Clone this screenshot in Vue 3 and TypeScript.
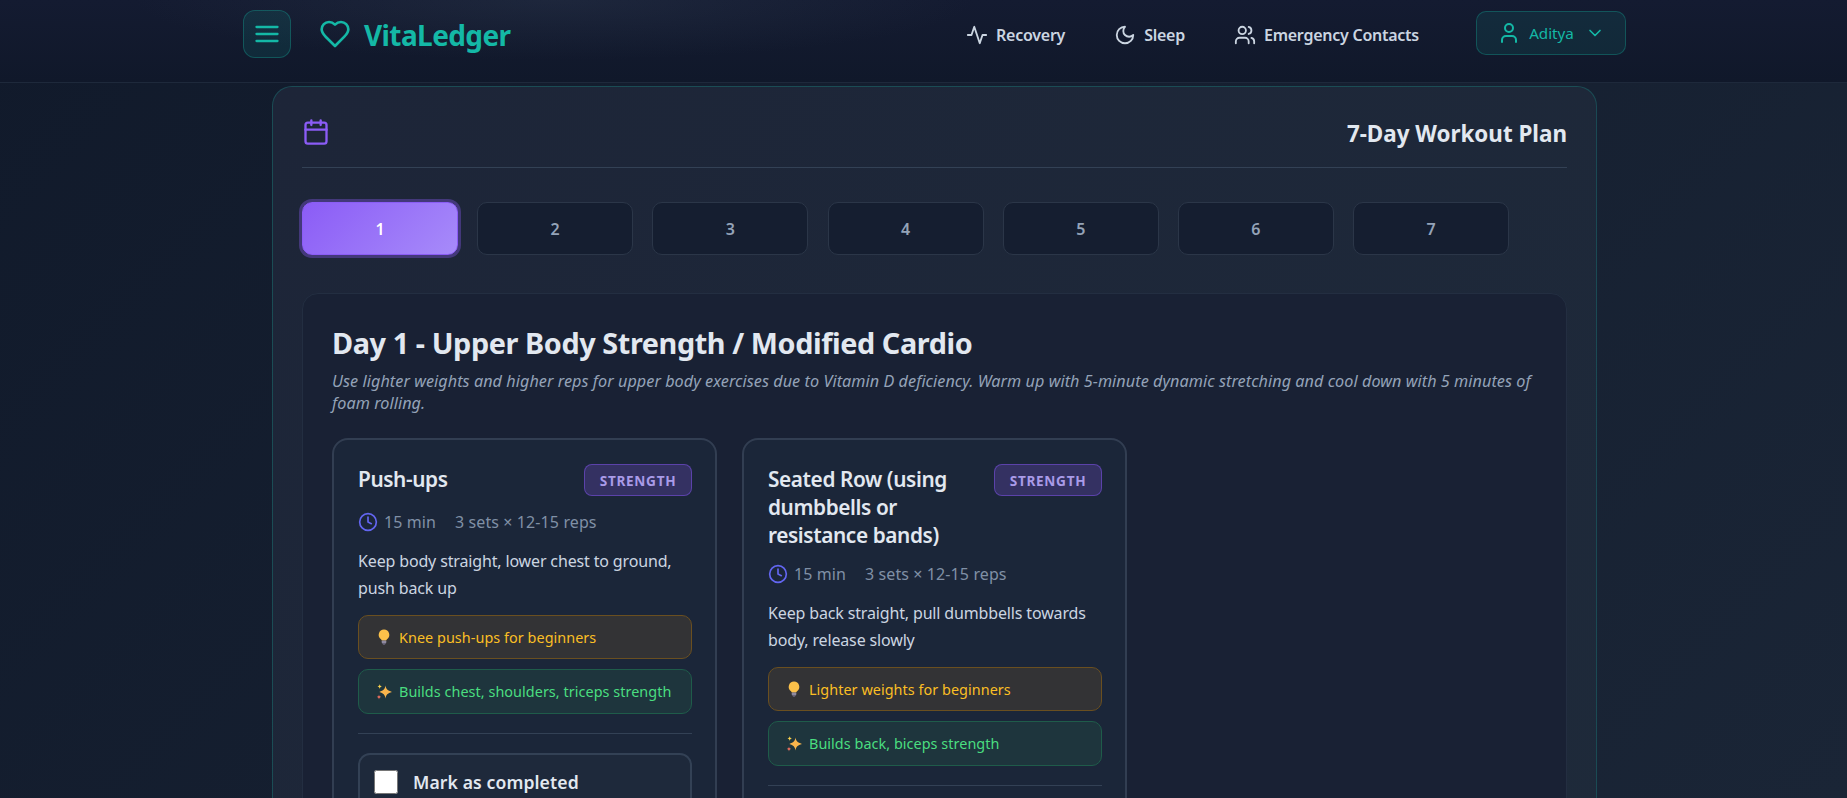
<script setup lang="ts">
import { ref } from 'vue'

type Exercise = {
    name: string
    duration: string
    sets: string
    description: string
    tip: string
    benefit: string
}

const days = [1, 2, 3, 4, 5, 6, 7]
const active_day = ref(1)

const exercises: Exercise[] = [
    {
        name: 'Push-ups',
        duration: '15 min',
        sets: '3 sets × 12-15 reps',
        description: 'Keep body straight, lower chest to ground, push back up',
        tip: 'Knee push-ups for beginners',
        benefit: 'Builds chest, shoulders, triceps strength',
    },
    {
        name: 'Seated Row (using dumbbells or resistance bands)',
        duration: '15 min',
        sets: '3 sets × 12-15 reps',
        description: 'Keep back straight, pull dumbbells towards body, release slowly',
        tip: 'Lighter weights for beginners',
        benefit: 'Builds back, biceps strength',
    },
]
</script>

<template>
    <div class="page">
        <header class="navbar">
            <div class="nav-inner">
                <button class="menu-btn" aria-label="Menu">
                    <svg width="28" height="28" viewBox="0 0 24 24" class="stroke"><path d="M3 6h18M3 12h18M3 18h18" /></svg>
                </button>
                <div class="brand">
                    <svg width="32" height="32" viewBox="0 0 24 24" class="stroke">
                        <path d="M19 14c1.49-1.46 3-3.21 3-5.5A5.5 5.5 0 0 0 16.5 3c-1.76 0-3 .5-4.5 2-1.5-1.500-2.740-2-4.500-2A5.500 5.500 0 0 0 2 8.500c0 2.300 1.500 4.050 3 5.500l7 7Z" />
                    </svg>
                    <span class="brand-name">VitaLedger</span>
                </div>
                <nav class="links">
                    <a class="link">
                        <svg width="22" height="22" viewBox="0 0 24 24" class="stroke"><path d="M22 12h-4l-3 9L9 3l-3 9H2" /></svg>
                        Recovery
                    </a>
                    <a class="link">
                        <svg width="22" height="22" viewBox="0 0 24 24" class="stroke"><path d="M12 3a6 6 0 0 0 9 9 9 9 0 1 1-9-9Z" /></svg>
                        Sleep
                    </a>
                    <a class="link">
                        <svg width="22" height="22" viewBox="0 0 24 24" class="stroke">
                            <path d="M16 21v-2a4 4 0 0 0-4-4H6a4 4 0 0 0-4 4v2" />
                            <circle cx="9" cy="7" r="4" />
                            <path d="M22 21v-2a4 4 0 0 0-3-3.870M16 3.130a4 4 0 0 1 0 7.750" />
                        </svg>
                        Emergency Contacts
                    </a>
                </nav>
                <button class="user-btn">
                    <svg width="24" height="24" viewBox="0 0 24 24" class="stroke">
                        <path d="M19 21v-2a4 4 0 0 0-4-4H9a4 4 0 0 0-4 4v2" />
                        <circle cx="12" cy="7" r="4" />
                    </svg>
                    <span>Aditya</span>
                    <svg width="20" height="20" viewBox="0 0 24 24" class="stroke"><path d="m6 9 6 6 6-6" /></svg>
                </button>
            </div>
        </header>

        <main class="plan">
            <div class="plan-head">
                <svg width="28" height="28" viewBox="0 0 24 24" class="stroke calendar">
                    <path d="M8 2v4M16 2v4" />
                    <rect x="3" y="4" width="18" height="18" rx="2" />
                    <path d="M3 10h18" />
                </svg>
                <h2>7-Day Workout Plan</h2>
            </div>

            <div class="tabs">
                <button
                    v-for="day in days"
                    :key="day"
                    class="tab"
                    :class="{ active: day === active_day }"
                    @click="active_day = day"
                >
                    {{ day }}
                </button>
            </div>

            <section class="day-panel">
                <h3>Day 1 - Upper Body Strength / Modified Cardio</h3>
                <p class="day-note">
                    Use lighter weights and higher reps for upper body exercises due to Vitamin D deficiency. Warm up with 5-minute dynamic stretching and cool down with 5 minutes of foam rolling.
                </p>

                <div class="cards">
                    <article v-for="ex in exercises" :key="ex.name" class="card">
                        <div class="card-top">
                            <h4>{{ ex.name }}</h4>
                            <span class="badge">STRENGTH</span>
                        </div>
                        <div class="meta">
                            <svg width="20" height="20" viewBox="0 0 24 24" class="stroke clock">
                                <circle cx="12" cy="12" r="10" />
                                <path d="M12 6v6l4 2" />
                            </svg>
                            <span>{{ ex.duration }}</span>
                            <span class="sets">{{ ex.sets }}</span>
                        </div>
                        <p class="description">{{ ex.description }}</p>
                        <div class="note tip">
                            <svg width="16" height="16" viewBox="-2 0 18 18">
                                <path d="M7 .5a6 6 0 0 0-3.400 10.900c.6.5.9 1.100.9 1.600h5c0-.5.3-1.100.9-1.600A6 6 0 0 0 7 .5Z" fill="#fcc14a" />
                                <rect x="4.500" y="13" width="5" height="3.400" rx=".8" fill="#8f8aa0" />
                                <rect x="5.600" y="16" width="2.800" height="1.600" rx=".6" fill="#6d6880" />
                            </svg>
                            <span>{{ ex.tip }}</span>
                        </div>
                        <div class="note benefit">
                            <svg width="16" height="16" viewBox="0 0 16 16">
                                <path d="M9.500 1.500c.6 3.600 1.900 5 6.500 6.400-4.600 1.300-5.900 2.700-6.500 6.600-.6-3.900-1.900-5.300-6.200-6.600C7.600 6.500 8.900 5.100 9.500 1.500Z" fill="#f9b54c" />
                                <path d="M3.700 0c.2 1.500.8 2 2.200 2.500-1.400.4-2 1-2.200 2.500-.2-1.500-.8-2.100-2.200-2.500C2.900 2 3.500 1.500 3.700 0Z" fill="#fcd34d" />
                                <path d="M3 10.400c.2 1.500.7 2 2.200 2.500-1.500.4-2 1-2.200 2.600-.2-1.600-.7-2.200-2.200-2.600 1.500-.5 2-1 2.200-2.500Z" fill="#f97360" />
                            </svg>
                            <span>{{ ex.benefit }}</span>
                        </div>
                        <hr class="rule" />
                        <label class="complete">
                            <input type="checkbox" />
                            <span>Mark as completed</span>
                        </label>
                    </article>
                </div>
            </section>
        </main>
    </div>
</template>

<style>
html,
body {
    margin: 0;
    overflow: hidden;
    background: #111a2b;
}
</style>

<style scoped>
.page {
    height: 100vh;
    overflow: hidden;
    background: linear-gradient(135deg, #111a2b 0%, #1a2536 100%);
    font-family: "Noto Sans", "Open Sans", sans-serif;
    color: #e2e8f0;
}

.stroke {
    fill: none;
    stroke: currentColor;
    stroke-width: 2;
    stroke-linecap: round;
    stroke-linejoin: round;
    flex: none;
}

.navbar {
    height: 83px;
    box-sizing: border-box;
    background:
        radial-gradient(ellipse 420px 60px at 30% 0, rgba(51, 65, 85, 0.3), transparent),
        linear-gradient(180deg, #141b31 0%, #10182a 100%);
    border-bottom: 1px solid #1e293b;
}

.nav-inner {
    width: 1423px;
    box-sizing: border-box;
    margin-left: 223px;
    padding: 10px 20px 0;
    display: flex;
    align-items: flex-start;
}

.menu-btn {
    width: 48px;
    height: 48px;
    padding: 0;
    display: flex;
    align-items: center;
    justify-content: center;
    color: #14b8a6;
    background: rgba(20, 184, 166, 0.12);
    border: 1px solid rgba(20, 184, 166, 0.3);
    border-radius: 12px;
}

.brand {
    display: flex;
    align-items: center;
    gap: 13px;
    margin-left: 28px;
    height: 48px;
    color: #14b8a6;
}

.brand-name {
    padding-top: 2px;
    font-size: 28px;
    font-weight: 700;
    letter-spacing: -0.6px;
}

.links {
    display: flex;
    align-items: center;
    gap: 49px;
    height: 50px;
    margin-left: auto;
    margin-right: 57px;
}

.link {
    display: flex;
    align-items: center;
    gap: 8px;
    font-size: 16px;
    font-weight: 600;
    color: #cbd5e1;
    letter-spacing: -0.25px;
}

.user-btn {
    width: 150px;
    height: 44px;
    margin-top: 1px;
    display: flex;
    align-items: center;
    justify-content: center;
    gap: 8px;
    padding: 0;
    color: #14b8a6;
    font: 400 15.2px "Noto Sans", sans-serif;
    background: rgba(20, 184, 166, 0.1);
    border: 1px solid rgba(20, 184, 166, 0.3);
    border-radius: 10px;
}

.user-btn span {
    margin-right: 3px;
}

.plan {
    width: 1325px;
    box-sizing: border-box;
    margin: 3px 0 0 272px;
    padding: 30px 29px 30px;
    background: linear-gradient(135deg, #1d2538 0%, #1e2a3a 100%);
    border: 1px solid rgba(20, 184, 166, 0.25);
    border-radius: 20px;
}

.plan-head {
    height: 50px;
    display: flex;
    align-items: flex-start;
    justify-content: space-between;
    border-bottom: 1px solid #334155;
}

.calendar {
    color: #8b5cf6;
    margin-top: 1px;
}

h2 {
    margin: 0;
    font-size: 22.4px;
    font-weight: 700;
    line-height: 34px;
    color: #e2e8f0;
}

.tabs {
    display: flex;
    gap: 19.2px;
    margin-top: 34px;
}

.tab {
    width: 156px;
    height: 53px;
    padding: 0;
    font: 600 16px "Noto Sans", sans-serif;
    color: #94a3b8;
    background: #151e30;
    border: 1px solid #2b3648;
    border-radius: 10px;
}

.tab.active {
    color: #fff;
    background: linear-gradient(135deg, #8b5cf6 0%, #a78bfa 100%);
    border-color: #8b5cf6;
    box-shadow: 0 0 0 3px rgba(139, 92, 246, 0.35);
}

.day-panel {
    margin-top: 38px;
    padding: 30px 29px;
    background: #192134;
    border: 1px solid #232e41;
    border-radius: 16px;
}

h3 {
    margin: 0;
    font-size: 28.8px;
    font-weight: 700;
    line-height: 38px;
    color: #e2e8f0;
    letter-spacing: -0.4px;
}

.day-note {
    margin: 8px 0 0;
    font-size: 16.2px;
    font-style: italic;
    line-height: 22px;
    color: #94a3b8;
    letter-spacing: 0.06px;
}

.cards {
    display: grid;
    grid-template-columns: repeat(3, 385px);
    gap: 25px;
    align-items: start;
    margin-top: 24px;
}

.card {
    box-sizing: border-box;
    padding: 24px 23px 24px 24px;
    background: #1b2639;
    border: 2px solid #323e52;
    border-radius: 16px;
}

.card-top {
    display: flex;
    align-items: flex-start;
    justify-content: space-between;
    gap: 14px;
    min-height: 33px;
}

h4 {
    margin: 1px 0 0;
    font-size: 20.8px;
    font-weight: 600;
    line-height: 28px;
    color: #e2e8f0;
    letter-spacing: -0.4px;
}

.badge {
    flex: none;
    width: 108px;
    height: 32px;
    box-sizing: border-box;
    display: flex;
    align-items: center;
    justify-content: center;
    font-size: 13.6px;
    font-weight: 700;
    letter-spacing: 0.7px;
    color: #a99be8;
    background: rgba(139, 92, 246, 0.22);
    border: 1px solid rgba(124, 80, 230, 0.55);
    border-radius: 8px;
}

.meta {
    display: flex;
    align-items: center;
    gap: 6px;
    margin-top: 13px;
    font-size: 16px;
    line-height: 24px;
    color: #8090a6;
    letter-spacing: 0.1px;
}

.clock {
    color: #6366f1;
}

.sets {
    margin-left: 13px;
}

.description {
    margin: 14px 0 0;
    font-size: 16px;
    line-height: 27px;
    color: #cbd5e1;
    letter-spacing: -0.15px;
}

.note {
    display: flex;
    align-items: center;
    gap: 7px;
    box-sizing: border-box;
    padding: 0 17px;
    font-size: 14.4px;
    border-radius: 10px;
    letter-spacing: 0.05px;
}

.tip {
    height: 44px;
    margin-top: 13px;
    color: #fbbf24;
    background: #333335;
    border: 1px solid #6a4f20;
}

.benefit {
    height: 45px;
    margin-top: 10px;
    color: #4ade80;
    background: #1e353d;
    border: 1px solid #1f5c4a;
}

.rule {
    margin: 19px 0;
    height: 1px;
    border: 0;
    background: #334155;
}

.complete {
    display: flex;
    align-items: center;
    gap: 15px;
    padding: 15px 14px;
    font-size: 17.6px;
    font-weight: 600;
    color: #e2e8f0;
    background: #1e293b;
    border: 2px solid #334155;
    border-radius: 12px;
    letter-spacing: 0.1px;
}

.complete input {
    width: 24px;
    height: 24px;
    margin: 0;
}
</style>
